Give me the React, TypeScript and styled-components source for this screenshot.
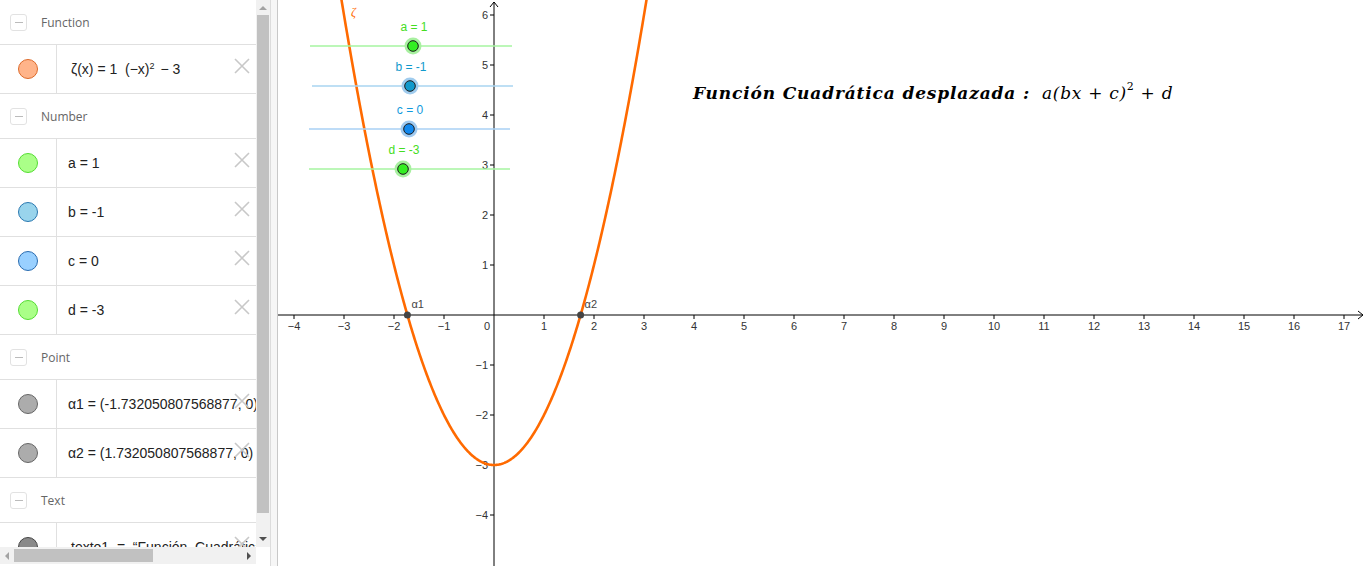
import styled, { createGlobalStyle } from "styled-components";

const GlobalStyle = createGlobalStyle`
    html, body {
        margin: 0;
        padding: 0;
        background: #ffffff;
        overflow: hidden;
    }
    body {
        font-family: "Liberation Sans", Arial, sans-serif;
    }
`;

// graph geometry (px in the graphics view)
const OX = 216;
const OY = 315;
const UNIT = 50;
const VIEW_W = 1088;
const VIEW_H = 566;

const Page = styled.div`
    display: flex;
    width: 1366px;
    height: 566px;
    overflow: hidden;
`;

const AlgebraView = styled.div`
    width: 270px;
    height: 566px;
    display: grid;
    grid-template-columns: 256px 14px;
    grid-template-rows: 547px 19px;
    background: #fff;
`;

const ListArea = styled.div`
    overflow: hidden;
    position: relative;
`;

const Divider = styled.div`
    width: 6px;
    background: #f6f6f6;
    border-left: 1px solid #dcdcdc;
    border-right: 1px solid #c8c8c8;
`;

const Graphics = styled.div`
    position: relative;
    flex: 1;
    height: 566px;
    background: #fff;
`;

const GroupHeader = styled.div`
    display: flex;
    align-items: center;
    height: 44px;
    border-bottom: 1px solid #e0e0e0;
    font-family: "Open Sans", "Noto Sans", sans-serif;
    font-size: 12px;
    color: #666;
`;

const Toggle = styled.div`
    width: 15px;
    height: 15px;
    margin: 0 14px 0 10px;
    border: 1px solid #e2e2e2;
    border-radius: 3px;
    display: flex;
    align-items: center;
    justify-content: center;
    &::after {
        content: "";
        width: 8px;
        height: 1px;
        background: #bbb;
    }
`;

const ItemRow = styled.div`
    display: flex;
    height: 48px;
    border-bottom: 1px solid #e0e0e0;
    position: relative;
`;

const Marker = styled.div`
    width: 56px;
    flex: none;
    border-right: 1px solid #e0e0e0;
    display: flex;
    align-items: center;
    justify-content: center;
`;

const Dot = styled.div<{ $fill: string; $line: string }>`
    width: 18px;
    height: 18px;
    border-radius: 50%;
    background: ${(p) => p.$fill};
    border: 1px solid ${(p) => p.$line};
`;

const Formula = styled.div<{ $indent?: number }>`
    flex: 1;
    display: flex;
    align-items: center;
    padding-left: ${(p) => p.$indent ?? 11}px;
    white-space: pre;
    overflow: hidden;
    font-family: "Liberation Sans", Arial, sans-serif;
    font-size: 14px;
    color: #222;
`;

const Sup = styled.sup`
    font-size: 9px;
    line-height: 0;
    position: relative;
    top: -3px;
    margin-right: 2px;
`;

const Remove = styled.div`
    position: absolute;
    right: 5px;
    top: 12px;
    width: 18px;
    height: 18px;
`;

const VTrack = styled.div`
    background: #f1f1f1;
    display: flex;
    flex-direction: column;
    align-items: center;
`;

const HTrack = styled.div`
    background: #f1f1f1;
    display: flex;
    align-items: center;
    height: 17px;
`;

const Corner = styled.div`
    background: #fff;
`;

const Arrow = styled.div<{ $dir: "up" | "down" | "left" | "right" }>`
    width: 0;
    height: 0;
    flex: none;
    ${(p) =>
        p.$dir === "up"
            ? "border-left:4px solid transparent;border-right:4px solid transparent;border-bottom:4px solid #a3a3a3;margin:6px 0 5px;"
            : p.$dir === "down"
            ? "border-left:4px solid transparent;border-right:4px solid transparent;border-top:4px solid #505050;margin:5px 0 6px;"
            : p.$dir === "left"
            ? "border-top:4px solid transparent;border-bottom:4px solid transparent;border-right:4px solid #a3a3a3;margin:0 5px 0 5px;"
            : "border-top:4px solid transparent;border-bottom:4px solid transparent;border-left:4px solid #505050;margin:0 5px 0 5px;"}
`;

const VThumb = styled.div`
    width: 12px;
    height: 498px;
    background: #c1c1c1;
`;

const Spacer = styled.div`
    flex: 1;
`;

const HThumb = styled.div`
    width: 139px;
    height: 13px;
    background: #c1c1c1;
`;

const Title = styled.div`
    position: absolute;
    left: 415px;
    top: 83px;
    white-space: nowrap;
    font-family: "DejaVu Serif", "Liberation Serif", serif;
    font-style: italic;
    font-size: 17px;
    color: #000;
`;

const TitleWords = styled.b`
    font-weight: bold;
    letter-spacing: 0.85px;
`;

const TitleMath = styled.span`
    margin-left: 12px;
    font-weight: normal;
    letter-spacing: 0.7px;
`;

const MathSup = styled.sup`
    font-size: 11px;
    font-style: normal;
    line-height: 0;
    position: relative;
    top: -2px;
`;

const RemoveIcon = () => (
    <svg width="18" height="18" viewBox="0 0 18 18">
        <path d="M2 2 L16 16 M16 2 L2 16" stroke="#c8c8c8" strokeWidth="1.6" />
    </svg>
);

type Item = { fill: string; line: string; indent?: number; content: React.ReactNode };
type Group = { name: string; items: Item[] };

const groups: Group[] = [
    {
        name: "Function",
        items: [
            {
                fill: "#ffb48a",
                line: "#dd6a2a",
                indent: 14,
                content: (
                    <>
                        {"ζ(x) = 1  (−x)"}
                        <Sup>2</Sup>
                        {" − 3"}
                    </>
                ),
            },
        ],
    },
    {
        name: "Number",
        items: [
            { fill: "#aaff88", line: "#55dd33", content: "a = 1" },
            { fill: "#99d4ec", line: "#2a78b0", content: "b = -1" },
            { fill: "#99d0ff", line: "#2a6cb0", content: "c = 0" },
            { fill: "#aaff88", line: "#55dd33", content: "d = -3" },
        ],
    },
    {
        name: "Point",
        items: [
            { fill: "#acacac", line: "#666", content: "α1 = (-1.732050807568877, 0)" },
            { fill: "#acacac", line: "#666", content: "α2 = (1.732050807568877, 0)" },
        ],
    },
    {
        name: "Text",
        items: [{ fill: "#8a8a8a", line: "#444", indent: 14, content: "texto1  =  “Función  Cuadrática  desplazada”" }],
    },
];

type Slider = { label: string; y: number; x1: number; x2: number; px: number; line: string; fill: string; halo: string; text: string };

const sliders: Slider[] = [
    { label: "a = 1", y: 46, x1: 310, x2: 512, px: 413, line: "#a6f5a0", fill: "#33ee22", halo: "#a8f0a0", text: "#44dd22" },
    { label: "b = -1", y: 86, x1: 312, x2: 513, px: 410, line: "#a8d4f0", fill: "#1199cc", halo: "#a0ccee", text: "#1199cc" },
    { label: "c = 0", y: 129, x1: 309, x2: 510, px: 409, line: "#a8d0f4", fill: "#1188ee", halo: "#a0caf0", text: "#1199dd" },
    { label: "d = -3", y: 169, x1: 309, x2: 510, px: 403, line: "#a6f5a0", fill: "#33ee22", halo: "#a8f0a0", text: "#44dd22" },
];

function curvePath() {
    const pts: string[] = [];
    for (let i = 0; i <= 400; i++) {
        const x = -3.2 + (6.4 * i) / 400;
        const y = x * x - 3;
        pts.push(`${(OX + x * UNIT).toFixed(2)},${(OY - y * UNIT).toFixed(2)}`);
    }
    return "M" + pts.join(" L");
}

const Plot = () => {
    const xt: number[] = [];
    for (let i = -4; i <= 17; i++) if (i !== 0) xt.push(i);
    const yt = [-4, -3, -2, -1, 1, 2, 3, 4, 5, 6];
    return (
        <svg width={VIEW_W} height={VIEW_H} style={{ display: "block" }}>
            <g fontFamily="Liberation Sans, Arial, sans-serif" fontSize="11" fill="#333">
                <line x1="0" y1={OY} x2={VIEW_W - 3} y2={OY} stroke="#000" strokeWidth="1" />
                <path d={`M${VIEW_W - 8} ${OY - 4} L${VIEW_W - 3} ${OY} L${VIEW_W - 8} ${OY + 4}`} stroke="#000" fill="none" />
                <line x1={OX} y1={VIEW_H} x2={OX} y2="2" stroke="#000" strokeWidth="1" />
                <path d={`M${OX - 4} 7 L${OX} 2 L${OX + 4} 7`} stroke="#000" fill="none" />
                {xt.map((i) => (
                    <g key={"x" + i}>
                        <line x1={OX + i * UNIT} y1={OY} x2={OX + i * UNIT} y2={OY + 4} stroke="#000" />
                        <text x={OX + i * UNIT} y={OY + 15} textAnchor="middle">
                            {i < 0 ? "−" + -i : i}
                        </text>
                    </g>
                ))}
                <text x={OX - 4} y={OY + 15} textAnchor="end">0</text>
                {yt.map((j) => (
                    <g key={"y" + j}>
                        <line x1={OX - 4} y1={OY - j * UNIT} x2={OX} y2={OY - j * UNIT} stroke="#000" />
                        <text x={OX - 6} y={OY - j * UNIT + 4} textAnchor="end">
                            {j < 0 ? "−" + -j : j}
                        </text>
                    </g>
                ))}
            </g>
            <path d={curvePath()} stroke="#ff6a00" strokeWidth="2.6" fill="none" />
            <text x="73" y="16" fill="#ff6a00" fontFamily="Liberation Serif, serif" fontStyle="italic" fontSize="12">ζ</text>
            {[-1.7320508, 1.7320508].map((r, i) => (
                <g key={"p" + i}>
                    <circle cx={OX + r * UNIT} cy={OY} r="3.5" fill="#444" />
                    <text x={OX + r * UNIT + 4} y={OY - 7} fill="#444" fontFamily="Liberation Sans, Arial, sans-serif" fontSize="11">
                        {"α" + (i + 1)}
                    </text>
                </g>
            ))}
            {sliders.map((s) => (
                <g key={s.label}>
                    <line x1={s.x1 - 278} y1={s.y} x2={s.x2 - 278} y2={s.y} stroke={s.line} strokeWidth="1.3" />
                    <circle cx={s.px - 278} cy={s.y} r="8.5" fill={s.halo} />
                    <circle cx={s.px - 278} cy={s.y} r="5.3" fill={s.fill} stroke="#1a1a1a" strokeWidth="1" />
                    <text
                        x={s.px - 277}
                        y={s.y - 15}
                        textAnchor="middle"
                        fill={s.text}
                        fontFamily="Liberation Sans, Arial, sans-serif"
                        fontSize="12"
                    >
                        {s.label}
                    </text>
                </g>
            ))}
        </svg>
    );
};

const App = () => {
    return (
        <>
            <GlobalStyle />
            <Page>
                <AlgebraView>
                    <ListArea>
                        {groups.map((g) => (
                            <div key={g.name}>
                                <GroupHeader>
                                    <Toggle />
                                    {g.name}
                                </GroupHeader>
                                {g.items.map((it, k) => (
                                    <ItemRow key={k}>
                                        <Marker>
                                            <Dot $fill={it.fill} $line={it.line} />
                                        </Marker>
                                        <Formula $indent={it.indent}>{it.content}</Formula>
                                        <Remove>
                                            <RemoveIcon />
                                        </Remove>
                                    </ItemRow>
                                ))}
                            </div>
                        ))}
                    </ListArea>
                    <VTrack>
                        <Arrow $dir="up" />
                        <VThumb />
                        <Spacer />
                        <Arrow $dir="down" />
                    </VTrack>
                    <HTrack>
                        <Arrow $dir="left" />
                        <HThumb />
                        <Spacer />
                        <Arrow $dir="right" />
                    </HTrack>
                    <Corner />
                </AlgebraView>
                <Divider />
                <Graphics>
                    <Plot />
                    <Title>
                        <TitleWords>Función Cuadrática desplazada :</TitleWords>
                        <TitleMath>
                            a(bx + c)<MathSup>2</MathSup> + d
                        </TitleMath>
                    </Title>
                </Graphics>
            </Page>
        </>
    );
};

export default App;
